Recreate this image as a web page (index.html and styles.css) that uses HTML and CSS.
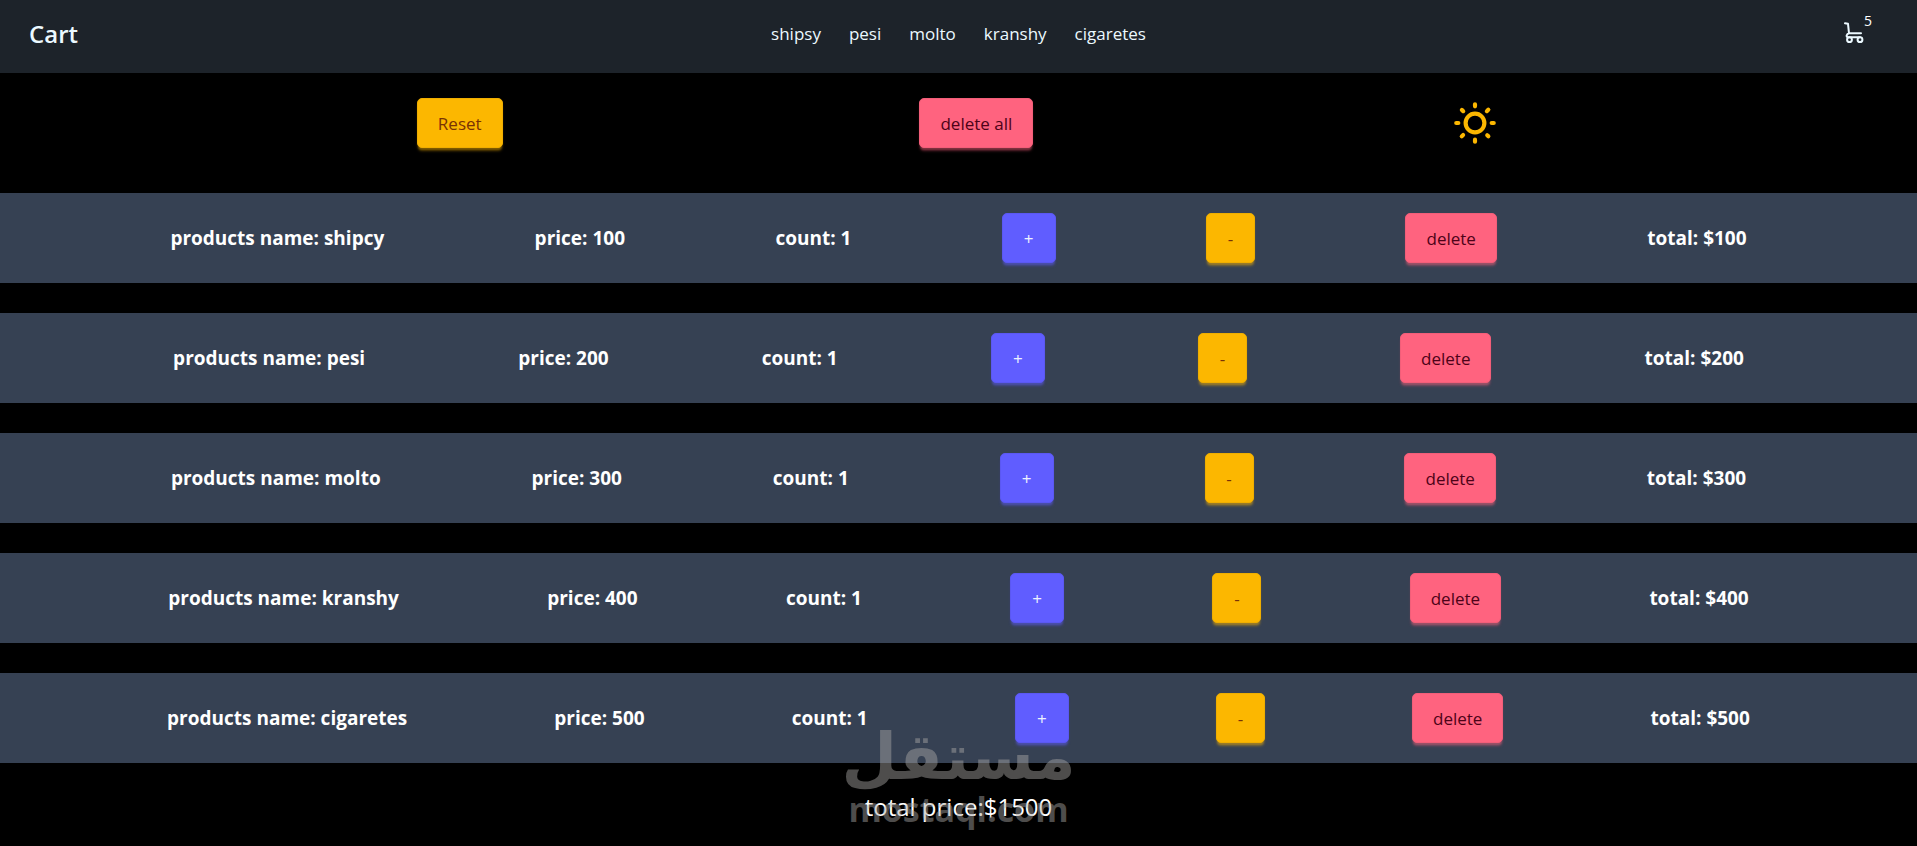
FILE: index.html
```html
<!DOCTYPE html>
<html lang="en">
<head>
    <meta charset="UTF-8">
    <meta name="viewport" content="width=device-width, initial-scale=1.0">
    <title>Cart</title>
    <link rel="stylesheet" href="styles.css">
</head>
<body>
    <header class="navbar">
        <a class="logo" href="#">Cart</a>
        <nav class="menu">
            <a href="#shipsy">shipsy</a>
            <a href="#pesi">pesi</a>
            <a href="#molto">molto</a>
            <a href="#kranshy">kranshy</a>
            <a href="#cigaretes">cigaretes</a>
        </nav>
        <div class="navbar-end">
            <a class="cart" href="#cart" aria-label="Cart items">
                <svg width="20" height="24" viewBox="0 0 20 24" fill="none" stroke="currentColor" stroke-width="2" stroke-linecap="round" stroke-linejoin="round">
                    <path d="M1 1.200L4 1.800L5 11.300H17M5 11.300C2.500 12 2 14.500 3.500 15.200H16"/>
                    <circle cx="5.500" cy="17.700" r="2.400"/>
                    <circle cx="16" cy="17.700" r="2.400"/>
                </svg>
                <span class="cart-count">5</span>
            </a>
        </div>
    </header>

    <main>
        <div class="actions">
            <button class="btn warning">Reset</button>
            <button class="btn error">delete all</button>
            <button class="theme" aria-label="Toggle theme">
                <svg width="50" height="50" viewBox="0 0 24 24" fill="currentColor">
                    <path d="M5.64,17l-.71.71a1,1,0,0,0,0,1.410,1,1,0,0,0,1.410,0l.71-.71A1,1,0,0,0,5.640,17ZM5,12a1,1,0,0,0-1-1H3a1,1,0,0,0,0,2H4A1,1,0,0,0,5,12Zm7-7a1,1,0,0,0,1-1V3a1,1,0,0,0-2,0V4A1,1,0,0,0,12,5ZM5.640,7.050a1,1,0,0,0,.7.290,1,1,0,0,0,.71-.29,1,1,0,0,0,0-1.410l-.71-.71A1,1,0,0,0,4.930,6.340Zm12,.29a1,1,0,0,0,.7-.29l.71-.71a1,1,0,1,0-1.410-1.410L17,5.640a1,1,0,0,0,0,1.410A1,1,0,0,0,17.660,7.340ZM21,11H20a1,1,0,0,0,0,2h1a1,1,0,0,0,0-2Zm-9,8a1,1,0,0,0-1,1v1a1,1,0,0,0,2,0V20A1,1,0,0,0,12,19ZM18.360,17A1,1,0,0,0,17,18.360l.71.71a1,1,0,0,0,1.410,0,1,1,0,0,0,0-1.410ZM12,6.500A5.500,5.500,0,1,0,17.500,12,5.510,5.510,0,0,0,12,6.500Zm0,9A3.500,3.500,0,1,1,15.500,12,3.500,3.500,0,0,1,12,15.500Z"/>
                </svg>
            </button>
        </div>

        <div class="products">
            <div class="product">
                <h2>products name: shipcy</h2>
                <h2>price: 100</h2>
                <h2>count: 1</h2>
                <button class="btn primary">+</button>
                <button class="btn warning">-</button>
                <button class="btn error">delete</button>
                <h2>total: $100</h2>
            </div>
            <div class="product">
                <h2>products name: pesi</h2>
                <h2>price: 200</h2>
                <h2>count: 1</h2>
                <button class="btn primary">+</button>
                <button class="btn warning">-</button>
                <button class="btn error">delete</button>
                <h2>total: $200</h2>
            </div>
            <div class="product">
                <h2>products name: molto</h2>
                <h2>price: 300</h2>
                <h2>count: 1</h2>
                <button class="btn primary">+</button>
                <button class="btn warning">-</button>
                <button class="btn error">delete</button>
                <h2>total: $300</h2>
            </div>
            <div class="product">
                <h2>products name: kranshy</h2>
                <h2>price: 400</h2>
                <h2>count: 1</h2>
                <button class="btn primary">+</button>
                <button class="btn warning">-</button>
                <button class="btn error">delete</button>
                <h2>total: $400</h2>
            </div>
            <div class="product">
                <h2>products name: cigaretes</h2>
                <h2>price: 500</h2>
                <h2>count: 1</h2>
                <button class="btn primary">+</button>
                <button class="btn warning">-</button>
                <button class="btn error">delete</button>
                <h2>total: $500</h2>
            </div>
        </div>

        <div class="summary">
            <p class="total-price">total price:$1500</p>
            <div class="watermark">
                <span class="watermark-name" lang="ar" dir="rtl">مستقل</span>
                <span class="watermark-site">mostaql.com</span>
            </div>
        </div>
    </main>
</body>
</html>
```

FILE: styles.css
```css
* {
    box-sizing: border-box;
    margin: 0;
    padding: 0;
}
body {
    min-height: 100vh;
    background-color: #000;
    color: #fff;
    font-family: "Segoe UI", "Open Sans", "Noto Sans", sans-serif;
    font-size: 17px;
}
a {
    color: inherit;
    text-decoration: none;
}
.navbar {
    display: grid;
    grid-template-columns: 1fr auto 1fr;
    align-items: center;
    height: 73px;
    padding: 0 29px 6px;
    background-color: #1d232a;
    color: #ecf9ff;
}
.logo {
    font-size: 24px;
    font-weight: 600;
}
.menu {
    display: flex;
    gap: 28px;
}
.navbar-end {
    display: flex;
    justify-content: flex-end;
    padding-right: 24px;
}
.cart {
    position: relative;
    display: flex;
}
.cart-count {
    position: absolute;
    top: -11px;
    right: -8px;
    color: #fff;
    font-size: 14px;
}
.actions {
    display: flex;
    justify-content: space-evenly;
    align-items: center;
    padding: 25px 0 45px;
}
.btn {
    height: 50px;
    min-width: 49px;
    padding: 0 20px;
    border: 1px solid;
    border-radius: 5px;
    font-family: inherit;
    font-size: 17px;
    font-weight: 500;
    cursor: pointer;
}
.primary {
    min-width: 54px;
    background-color: #605dff;
    border-color: #5b58f2;
    color: #edf1fe;
    box-shadow: 0 3px 2px -1px #605dff4d, 0 4px 3px -1px #605dff4d;
}
.warning {
    background-color: #fcb700;
    border-color: #efae00;
    color: #793205;
    box-shadow: 0 3px 2px -1px #fcb7004d, 0 4px 3px -1px #fcb7004d;
}
.error {
    background-color: #ff637f;
    border-color: #f25e79;
    color: #4d0218;
    box-shadow: 0 3px 2px -1px #ff637f4d, 0 4px 3px -1px #ff637f4d;
}
.theme {
    display: flex;
    border: none;
    background: none;
    color: #fcb700;
    cursor: pointer;
}
.products {
    display: flex;
    flex-direction: column;
    gap: 30px;
}
.product {
    display: flex;
    justify-content: space-evenly;
    align-items: center;
    padding: 20px;
    background-color: #364153;
}
.product h2 {
    font-size: 19px;
    font-weight: 700;
}
.summary {
    position: relative;
    padding-top: 26px;
    text-align: center;
}
.total-price {
    font-size: 24px;
    line-height: 36px;
}
.watermark {
    position: absolute;
    left: 50%;
    top: -40px;
    display: flex;
    flex-direction: column;
    align-items: center;
    transform: translateX(-50%);
    color: #aaa8a6;
    opacity: 0.46;
    pointer-events: none;
}
.watermark-name {
    font-family: "DejaVu Sans", sans-serif;
    font-size: 64px;
    font-weight: 700;
    line-height: 68px;
}
.watermark-site {
    font-size: 34px;
    font-weight: 700;
    line-height: 36px;
}
```
